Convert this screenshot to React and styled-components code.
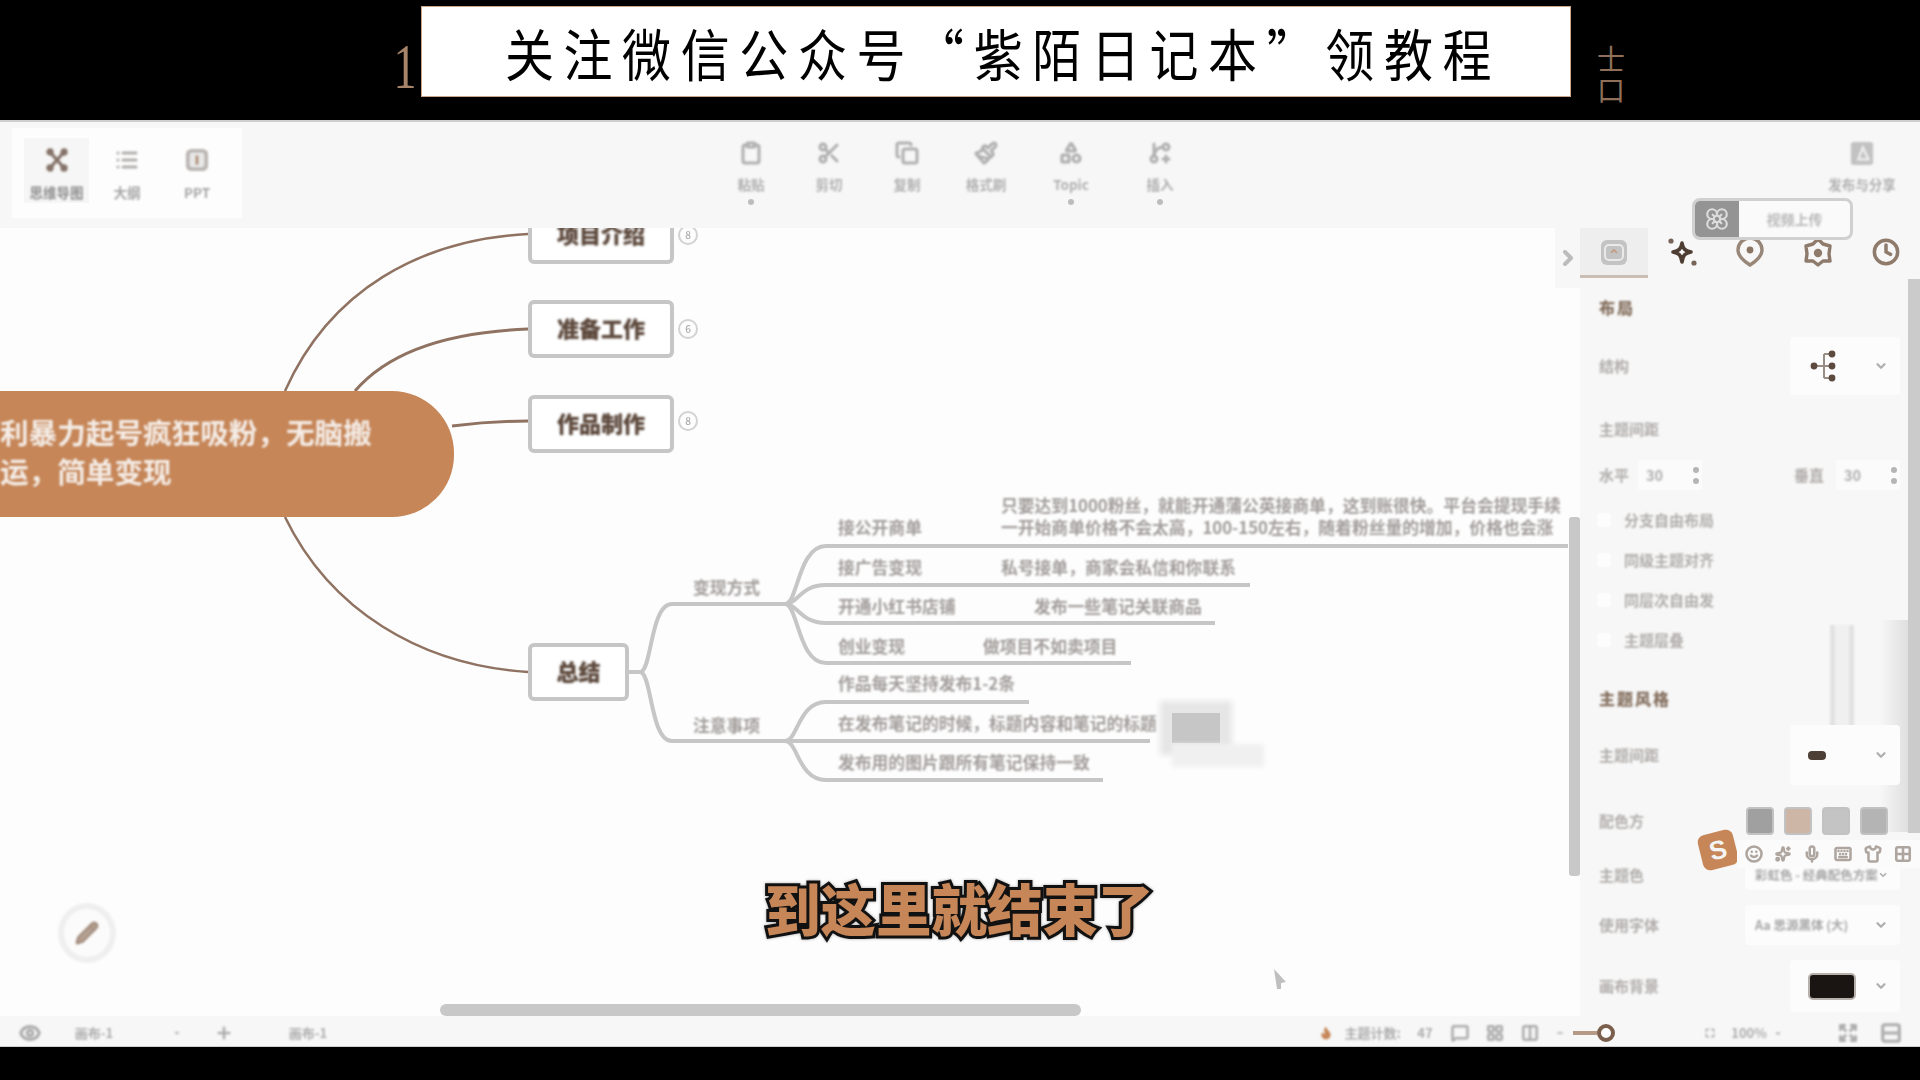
import React from 'react';
import styled, { createGlobalStyle } from 'styled-components';
import { List, Clipboard, Scissors, Copy, Paintbrush, Shapes, GitBranchPlus, Flower, Clock, ChevronDown, ChevronRight, Pencil, Eye, Plus, Flame, MessageSquare, LayoutGrid, Columns2, Maximize, Minus, Expand, Rows2, Mic, Keyboard, Shirt, Grid2x2, Smile, Sparkles } from 'lucide-react';

const CJK = '"Noto Sans CJK SC", "Noto Sans", sans-serif';

const Global = createGlobalStyle`
  html, body { margin: 0; padding: 0; background: #000; }
  body { font-family: ${CJK}; width: 1920px; height: 1080px; overflow: hidden; }
  * { box-sizing: border-box; }
`;

const Page = styled.div`
  width: 1920px; height: 1080px; display: flex; flex-direction: column; background: #000;
`;
const Banner = styled.header`
  height: 120px; flex: none; background: #000; display: flex; align-items: flex-start; padding: 7px 0 0 388px;
`;
const StrayOne = styled.span`
  width: 34px; height: 92px; display: flex; align-items: flex-end; justify-content: center;
  font: 64px/64px "Liberation Serif", serif; color: #a88468; transform: scaleX(.72);
`;
const BannerBox = styled.div`
  width: 1148px; height: 89px; background: #fff; box-shadow: 0 0 0 1px #c9a68c;
  display: flex; align-items: center; justify-content: center; overflow: hidden;
`;
const BannerText = styled.h1`
  margin: 0; font: 400 49px/60px ${CJK}; color: #000; letter-spacing: 9.6px; white-space: nowrap;
  transform: scaleY(1.14); padding-left: 14px;
`;
const StrayGlyph = styled.span`
  margin: 38px 0 0 25px; width: 32px; display: flex; flex-direction: column; align-items: center;
  font: 28px/31px "Liberation Serif", "Noto Sans CJK SC", serif; color: #8f6f58;
  span { height: 31px; overflow: hidden; }
`;

const Editor = styled.div`
  position: relative; flex: none; height: 927px; display: flex; flex-direction: column; background: #fdfdfd;
`;
const Toolbar = styled.div`
  height: 108px; flex: none; display: flex; background: #f7f7f7; border-top: 2px solid #cfcfcf;
`;
const LeftGroup = styled.div`
  margin: 6px 0 0 12px; width: 230px; height: 90px; padding: 10px 0 0 12px; background: #fdfdfd; display: flex; align-items: flex-start;
`;
const ModeItem = styled.div`
  width: ${p => p.$w}px; height: 65px; display: flex; flex-direction: column; align-items: center; padding-top: 10px;
  background: ${p => (p.$active ? '#f6f6f6' : 'transparent')};
`;
const IconBox = styled.span`
  width: 24px; height: 24px; flex: none; display: flex; align-items: center; justify-content: center; color: ${p => p.$c || '#b0aeac'}; filter: blur(.8px);
`;
const ModeLabel = styled.span`
  margin-top: 11px; font: 700 13.5px/18px ${CJK}; color: ${p => p.$c || '#a6a6a6'}; white-space: nowrap; filter: blur(1px);
`;
const CenterGroup = styled.div`
  margin-left: 470px; display: flex; align-items: flex-start;
`;
const Tool = styled.div`
  width: ${p => p.$w}px; display: flex; flex-direction: column; align-items: center; padding-top: 19px;
`;
const ToolLabel = styled.span`
  margin-top: 10px; font: 700 13.5px/18px ${CJK}; color: #b0b0b0; white-space: nowrap; filter: blur(1px);
`;
const Caret = styled.span`
  margin-top: 6px; width: 6px; height: 6px; border-radius: 50%; background: #bdbdbd; filter: blur(.5px);
`;
const RightTool = styled(Tool)`
  margin-left: auto; margin-right: 8px;
`;

const UploadButton = styled.div`
  position: absolute; left: 1692px; top: 78px; width: 161px; height: 42px; display: flex; border: 3px solid #d0d0d0; border-radius: 8px; background: #fafafa; overflow: hidden; z-index: 3;
`;
const UploadIcon = styled.span`
  width: 44px; background: #949494; display: flex; align-items: center; justify-content: center; color: #dcdcdc; flex: none;
  svg { filter: blur(.6px); }
`;
const UploadText = styled.span`
  flex: 1; text-align: center; font: 700 14px/36px ${CJK}; color: #b8b8b8; filter: blur(1.1px);
`;

const Main = styled.main`
  height: 788px; flex: none; display: flex;
`;
const Canvas = styled.section`
  position: relative; width: 1580px; flex: none; overflow: hidden; background: #fdfdfd;
`;
const Links = styled.svg`
  position: absolute; left: 0; top: 0; width: 1580px; height: 788px; filter: blur(.3px);
`;
const Root = styled.div`
  position: absolute; left: -300px; top: 163px; width: 754px; height: 126px; border-radius: 62px; background: #c68658;
  padding: 21px 0 0 300px; font: 700 28.6px/39px ${CJK}; color: #f4ece6;
  span { display: block; white-space: nowrap; filter: blur(1px); }
`;
const TopicNode = styled.div`
  position: absolute; left: 528px; top: ${p => p.$top}px; width: ${p => p.$w || 146}px; height: 58px;
  border: 4px solid #c6c6c6; border-radius: 6px; background: #fff; display: flex; align-items: center; justify-content: center; padding-bottom: 4px;
  font: 900 22px/30px ${CJK}; color: #5f4a3d;
  span { filter: blur(1px); text-shadow: 0 0 2px #bbb; }
`;
const Badge = styled.span`
  position: absolute; left: 678px; top: ${p => p.$top}px; width: 20px; height: 20px; border: 2px solid #d2d2d2; border-radius: 50%;
  font: 500 10px/16px ${CJK}; text-align: center; color: #aaa; filter: blur(.5px);
`;
const MapText = styled.span`
  position: absolute; left: ${p => p.$x}px; top: ${p => p.$y - 241}px; height: 24px;
  font: 700 16.8px/24px ${CJK}; color: #a09c9a; white-space: nowrap; filter: blur(1px);
`;
const Smudge = styled.div`
  position: absolute; left: 1172px; top: 485px; width: 48px; height: 30px; background: #c6c6c6;
  box-shadow: 0 0 6px 12px #e6e6e6;
`;
const SmudgeLow = styled.div`
  position: absolute; left: 1172px; top: 516px; width: 92px; height: 23px; background: #f0f0f0; filter: blur(2px);
`;
const FloatButton = styled.div`
  position: absolute; left: 58px; top: 675px; width: 58px; height: 60px; border-radius: 50%; border: 6px solid #efefef; background: #fbfbfb;
  display: flex; align-items: center; justify-content: center; color: #a89384; filter: blur(.8px);
`;
const HScroll = styled.div`
  position: absolute; left: 440px; top: 776px; width: 641px; height: 12px; border-radius: 6px; background: #c8c8c8;
`;
const VScroll = styled.div`
  position: absolute; left: 1569px; top: 289px; width: 11px; height: 359px; background: #c8c8c8; border-radius: 3px;
`;
const CursorMark = styled.svg`
  position: absolute; left: 1272px; top: 740px; width: 16px; height: 22px; filter: blur(.4px);
`;
const Subtitle = styled.div`
  position: absolute; left: 765px; top: 644px; width: 400px; white-space: nowrap;
  font: 900 55.5px/70px ${CJK}; color: #c68658; -webkit-text-stroke: 6px #111; paint-order: stroke fill;
  filter: drop-shadow(0 0 1.5px #aaa);
`;

const Panel = styled.aside`
  position: relative; width: 340px; flex: none; background: #f7f7f7;
`;
const PanelTab = styled.div`
  display: flex; height: 62px; position: relative;
`;
const PanelExtension = styled.div`
  position: absolute; left: -25px; top: 0; width: 25px; height: 60px; background: #f7f7f7; display: flex; align-items: center; justify-content: center; color: #bcbcbc;
  svg { filter: blur(.6px); }
`;
const Tab = styled.div`
  width: 68px; height: 50px; display: flex; align-items: center; justify-content: center;
  background: ${p => (p.$active ? '#eeeeee' : 'transparent')};
  border-bottom: 3px solid ${p => (p.$active ? '#c9bdb4' : 'transparent')};
  color: ${p => p.$c || '#a79a90'};
  svg { filter: blur(.7px); }
`;
const Body = styled.div`
  position: relative; padding: 0 20px 0 19px;
`;
const Row = styled.div`
  display: flex; align-items: center; justify-content: space-between; height: ${p => p.$h}px; margin-top: ${p => p.$mt || 0}px;
`;
const Heading = styled.span`
  font: 900 16px/24px ${CJK}; color: #85705f; filter: blur(.9px); letter-spacing: 2px;
`;
const FieldLabel = styled.span`
  font: 700 15px/20px ${CJK}; color: #b0adab; filter: blur(1.1px); white-space: nowrap;
`;
const SelectBox = styled.div`
  width: ${p => p.$w || 110}px; height: 100%; background: #fcfcfc; border-radius: 4px; display: flex; align-items: center; justify-content: space-between; padding: 0 12px 0 ${p => p.$pl || 18}px; color: #b0b0b0;
`;
const Pair = styled.div`
  display: flex; align-items: center; width: ${p => p.$w}px;
`;
const NumField = styled.div`
  margin-left: ${p => p.$ml}px; width: 64px; height: 30px; background: #fbfbfb; display: flex; align-items: center; justify-content: space-between; padding: 0 2px 0 8px;
  font: 700 14.5px/30px ${CJK}; color: #b0b0b0;
  b { font-weight: 700; filter: blur(1.1px); }
`;
const Spin = styled.span`
  width: 8px; display: flex; flex-direction: column; gap: 5px; align-items: center;
  i { width: 6px; height: 6px; border-radius: 50%; background: #b5b5b5; }
`;
const CheckLine = styled.div`
  display: flex; align-items: center; gap: 13px; height: ${p => p.$h}px; margin-top: ${p => p.$mt}px;
`;
const Check = styled.span`
  width: 14px; height: 14px; margin-left: -2px; border-radius: 3px; background: #fcfcfc; flex: none;
`;
const Swatches = styled.div`
  display: flex; gap: 10px; margin-left: auto; margin-right: 12px;
`;
const Swatch = styled.span`
  width: 28px; height: 28px; border-radius: 4px; background: ${p => p.$bg}; border: 2px solid #c2c2c2; filter: blur(.3px);
`;
const DarkPill = styled.span`
  width: 48px; height: 27px; background: #1a1512; border: 2px solid #b8b0aa; border-radius: 5px;
`;
const SmallPill = styled.span`
  width: 18px; height: 9px; background: #4d3f35; border-radius: 4px; filter: blur(.6px);
`;
const SelectText = styled.span`
  font: 700 12.5px/20px ${CJK}; color: #a6a6a6; white-space: nowrap; filter: blur(1px);
`;
const PanelScroll = styled.div`
  position: absolute; right: 0; top: 51px; width: 12px; height: 554px; background: #cbcbcb;
`;
const Ghost = styled.div`
  position: absolute; left: 250px; top: 397px; width: 24px; height: 115px; border-left: 5px solid #e2e2e2; border-right: 5px solid #e2e2e2; background: #f0f0f0; filter: blur(.8px);
`;
const GhostShade = styled.div`
  position: absolute; left: 300px; top: 392px; width: 28px; height: 212px; background: linear-gradient(90deg, #f7f7f7, #dfdfdf);
`;
const ImeBar = styled.div`
  position: absolute; left: 157px; top: 612px; width: 183px; height: 28px; background: #fbfbfb; display: flex; align-items: center; justify-content: space-around; color: #aea59f; padding: 0 2px;
  svg { filter: blur(.7px); }
`;
const ImeLogo = styled.span`
  position: absolute; left: 120px; top: 604px; width: 36px; height: 36px; border-radius: 7px; background: #c68658; transform: rotate(-14deg);
  display: flex; align-items: center; justify-content: center; font: 900 26px/36px "Liberation Sans", sans-serif; color: #f4f4f4;
`;

const StatusBar = styled.footer`
  height: 31px; flex: none; display: flex; align-items: center; padding-top: 4px; background: #f7f7f7; border-bottom: 1px solid #cfcfcf; color: #bcbcbc;
`;
const StatusItem = styled.span`
  width: ${p => p.$w}px; margin-left: ${p => p.$ml || 0}px; flex: none; display: flex; align-items: center; justify-content: center;
  font: 700 13px/20px ${CJK}; color: ${p => p.$c || '#adadad'}; white-space: nowrap; filter: blur(.9px);
`;
const Track = styled.span`
  width: 24px; height: 4px; margin-left: 9px; flex: none; background: #b79a85;
`;
const Knob = styled.span`
  width: 18px; height: 18px; flex: none; border-radius: 50%; border: 4px solid #7a5f4c; background: #fff; filter: blur(.3px);
`;
const BottomBlack = styled.div`
  height: 33px; flex: none; background: #000;
`;

const Cross = () => (
  <svg width="26" height="26" viewBox="0 0 24 24" fill="none" stroke="#86736a" strokeWidth="3.4" strokeLinecap="round">
    <path d="M5 4 19 20M19 4 5 20" />
    <circle cx="5" cy="4" r="2" /><circle cx="19" cy="4" r="2" /><circle cx="5" cy="20" r="2" /><circle cx="19" cy="20" r="2" />
  </svg>
);
const SlideIcon = () => (
  <svg width="26" height="26" viewBox="0 0 26 26">
    <rect x="1" y="1" width="24" height="24" rx="6" fill="#b9b5b2" />
    <rect x="5" y="5" width="16" height="16" rx="3" fill="#e8e8e8" />
    <rect x="11.5" y="8" width="3" height="10" fill="#b09078" />
  </svg>
);
const ShareDoc = () => (
  <svg width="26" height="26" viewBox="0 0 26 26">
    <rect x="1" y="1" width="24" height="25" rx="3" fill="#c2c2c2" />
    <path d="M14 7 20 20H9Z" fill="none" stroke="#f0f0f0" strokeWidth="2.4" />
  </svg>
);
const TabFace = () => (
  <svg width="30" height="30" viewBox="0 0 30 30">
    <rect x="2" y="3" width="26" height="25" rx="6" fill="#c3c3c3" />
    <rect x="6" y="8" width="18" height="15" rx="4" fill="none" stroke="#e9e9e9" strokeWidth="2" />
    <path d="M12 16 15 13 18 16" fill="none" stroke="#c39a80" strokeWidth="1.6" />
  </svg>
);
const TabSpark = () => (
  <svg width="30" height="32" viewBox="0 0 30 32" fill="none">
    <path d="M15 7C16 13 18 15 24 16 18 17 16 19 15 26 14 19 12 17 6 16 12 15 14 13 15 7Z" stroke="#4e3d33" strokeWidth="3.6" strokeLinejoin="round" />
    <circle cx="4" cy="5" r="2.6" fill="#776358" /><circle cx="27" cy="27" r="2.6" fill="#776358" />
  </svg>
);
const TabPin = () => (
  <svg width="28" height="30" viewBox="0 0 28 30" fill="none">
    <path d="M14 28C6 23 2 18 2 13A12 12 0 0 1 26 13C26 18 22 23 14 28Z" stroke="#988678" strokeWidth="3.4" />
    <circle cx="14" cy="13" r="3.4" fill="#8a7565" />
  </svg>
);
const TabFlower = () => (
  <svg width="30" height="30" viewBox="0 0 30 30" fill="none">
    <path d="M15 2 20 7 27 9 26 17 27 24 20 24 15 28 10 24 3 24 4 17 3 9 10 7Z" stroke="#8f7b6c" strokeWidth="3.4" strokeLinejoin="round" />
    <circle cx="15" cy="16" r="4.2" fill="#8f7b6c" />
  </svg>
);
const TreeIcon = () => (
  <svg width="30" height="34" viewBox="0 0 30 34" fill="none" stroke="#9a8d84" strokeWidth="2">
    <path d="M6 17H16M16 5V29M16 5H23M16 17H23M16 29H23" />
    <circle cx="6" cy="17" r="3.4" fill="#5d4a3f" stroke="none" />
    <circle cx="24" cy="5" r="3.4" fill="#5d4a3f" stroke="none" />
    <circle cx="24" cy="17" r="3.4" fill="#5d4a3f" stroke="none" />
    <circle cx="24" cy="29" r="3.4" fill="#5d4a3f" stroke="none" />
  </svg>
);

const tools = [
  { w: 78, label: '粘贴', icon: <Clipboard size={26} strokeWidth={3} />, caret: true },
  { w: 78, label: '剪切', icon: <Scissors size={26} strokeWidth={3} /> },
  { w: 78, label: '复制', icon: <Copy size={26} strokeWidth={3} /> },
  { w: 80, label: '格式刷', icon: <Paintbrush size={26} strokeWidth={3} /> },
  { w: 90, label: 'Topic', icon: <Shapes size={26} strokeWidth={3.2} />, caret: true },
  { w: 88, label: '插入', icon: <GitBranchPlus size={26} strokeWidth={3} />, caret: true },
];

const mapTexts = [
  { x: 693, y: 588, t: '变现方式' },
  { x: 693, y: 726, t: '注意事项' },
  { x: 838, y: 528, t: '接公开商单' },
  { x: 838, y: 568, t: '接广告变现' },
  { x: 838, y: 607, t: '开通小红书店铺' },
  { x: 838, y: 647, t: '创业变现' },
  { x: 838, y: 684, t: '作品每天坚持发布1-2条' },
  { x: 838, y: 724, t: '在发布笔记的时候\uFF0C标题内容和笔记的标题' },
  { x: 838, y: 763, t: '发布用的图片跟所有笔记保持一致' },
  { x: 1001, y: 506, t: '只要达到1000粉丝\uFF0C就能开通蒲公英接商单\uFF0C这到账很快。平台会提现手续' },
  { x: 1001, y: 528, t: '一开始商单价格不会太高\uFF0C100-150左右\uFF0C随着粉丝量的增加\uFF0C价格也会涨' },
  { x: 1001, y: 568, t: '私号接单\uFF0C商家会私信和你联系' },
  { x: 1034, y: 607, t: '发布一些笔记关联商品' },
  { x: 983, y: 647, t: '做项目不如卖项目' },
];

const curves = [
  { d: 'M285 391C330 290 420 240 528 234', c: '#8f7261', w: 2.5 },
  { d: 'M355 391C390 350 450 332 528 329', c: '#8f7261', w: 3 },
  { d: 'M452 426C475 423 500 421 528 421', c: '#8f7261', w: 3 },
  { d: 'M285 517C330 610 420 665 528 672', c: '#8f7261', w: 2.5 },
];
const grey = [
  'M629 672H640C652 672 650 604 672 604H785',
  'M640 672C652 672 650 741 672 741H785',
  'M785 604C798 604 798 546 826 546H1568',
  'M785 604C798 604 800 585 826 585H1250',
  'M785 604C798 604 800 623 826 623H1215',
  'M785 604C798 604 798 663 826 663H1131',
  'M785 741C798 741 798 702 826 702H1029',
  'M785 741H1150',
  'M785 741C798 741 798 780 826 780H1103',
];

export default function App() {
  return (
    <Page>
      <Global />
      <Banner>
        <StrayOne>1</StrayOne>
        <BannerBox><BannerText>关注微信公众号“紫陌日记本”领教程</BannerText></BannerBox>
        <StrayGlyph><span>士</span><span>口</span></StrayGlyph>
      </Banner>
      <Editor>
        <Toolbar>
          <LeftGroup>
            <ModeItem $w={65} $active><IconBox><Cross /></IconBox><ModeLabel $c="#8e8e8e">思维导图</ModeLabel></ModeItem>
            <ModeItem $w={76}><IconBox><List size={26} strokeWidth={3} /></IconBox><ModeLabel>大纲</ModeLabel></ModeItem>
            <ModeItem $w={64}><IconBox><SlideIcon /></IconBox><ModeLabel>PPT</ModeLabel></ModeItem>
          </LeftGroup>
          <CenterGroup>
            {tools.map(t => (
              <Tool key={t.label} $w={t.w}>
                <IconBox $c="#b0b0b0">{t.icon}</IconBox>
                <ToolLabel>{t.label}</ToolLabel>
                {t.caret && <Caret />}
              </Tool>
            ))}
          </CenterGroup>
          <RightTool $w={100}>
            <IconBox><ShareDoc /></IconBox>
            <ToolLabel>发布与分享</ToolLabel>
          </RightTool>
        </Toolbar>
        <UploadButton>
          <UploadIcon><Flower size={26} /></UploadIcon>
          <UploadText>视频上传</UploadText>
        </UploadButton>
        <Main>
          <Canvas>
            <Links viewBox="0 228 1580 788" fill="none">
              {curves.map(c => <path key={c.d} d={c.d} stroke={c.c} strokeWidth={c.w} />)}
              {grey.map(d => <path key={d} d={d} stroke="#c6c6c6" strokeWidth="4" />)}
            </Links>
            <Root><span>{'利暴力起号疯狂吸粉\uFF0C无脑搬'}</span><span>{'运\uFF0C简单变现'}</span></Root>
            <TopicNode $top={-22}><span>项目介绍</span></TopicNode>
            <TopicNode $top={72}><span>准备工作</span></TopicNode>
            <TopicNode $top={167}><span>作品制作</span></TopicNode>
            <TopicNode $top={415} $w={101}><span>总结</span></TopicNode>
            <Badge $top={-3}>8</Badge>
            <Badge $top={91}>6</Badge>
            <Badge $top={183}>8</Badge>
            {mapTexts.map(m => <MapText key={m.t} $x={m.x} $y={m.y}>{m.t}</MapText>)}
            <Smudge />
            <SmudgeLow />
            <FloatButton><Pencil size={24} fill="#b9a595" strokeWidth={3} /></FloatButton>
            <CursorMark viewBox="0 0 16 22"><path d="M2 1 14 14 9 15 9 21 5 21 2 1Z" fill="#bfbfbf" /></CursorMark>
            <VScroll />
            <HScroll />
            <Subtitle>到这里就结束了</Subtitle>
          </Canvas>
          <Panel>
            <GhostShade />
            <Ghost />
            <PanelTab>
              <PanelExtension><ChevronRight size={24} strokeWidth={4} /></PanelExtension>
              <Tab $active><TabFace /></Tab>
              <Tab><TabSpark /></Tab>
              <Tab><TabPin /></Tab>
              <Tab><TabFlower /></Tab>
              <Tab $c="#8f7b6c"><Clock size={28} strokeWidth={3} /></Tab>
            </PanelTab>
            <Body>
              <Row $h={34}><Heading>布局</Heading></Row>
              <Row $h={58} $mt={13}>
                <FieldLabel>结构</FieldLabel>
                <SelectBox><TreeIcon /><ChevronDown size={14} strokeWidth={4} /></SelectBox>
              </Row>
              <Row $h={20} $mt={24}><FieldLabel>主题间距</FieldLabel></Row>
              <Row $h={30} $mt={21}>
                <Pair $w={200}><FieldLabel>水平</FieldLabel><NumField $ml={9}><b>30</b><Spin><i /><i /></Spin></NumField></Pair>
                <Pair $w={106}><FieldLabel>垂直</FieldLabel><NumField $ml={12}><b>30</b><Spin><i /><i /></Spin></NumField></Pair>
              </Row>
              <CheckLine $h={24} $mt={18}><Check /><FieldLabel>分支自由布局</FieldLabel></CheckLine>
              <CheckLine $h={24} $mt={16}><Check /><FieldLabel>同级主题对齐</FieldLabel></CheckLine>
              <CheckLine $h={24} $mt={16}><Check /><FieldLabel>同层次自由发</FieldLabel></CheckLine>
              <CheckLine $h={24} $mt={16}><Check /><FieldLabel>主题层叠</FieldLabel></CheckLine>
              <Row $h={24} $mt={34}><Heading>主题风格</Heading></Row>
              <Row $h={60} $mt={15}>
                <FieldLabel>主题间距</FieldLabel>
                <SelectBox><SmallPill /><ChevronDown size={14} strokeWidth={4} /></SelectBox>
              </Row>
              <Row $h={28} $mt={22}>
                <FieldLabel>配色方</FieldLabel>
                <Swatches>
                  <Swatch $bg="#a0a0a0" />
                  <Swatch $bg="#cdb6a5" />
                  <Swatch $bg="#c4c4c4" />
                  <Swatch $bg="#b4b4b4" />
                </Swatches>
              </Row>
              <Row $h={30} $mt={25}>
                <FieldLabel>主题色</FieldLabel>
                <SelectBox $w={155} $pl={10}><SelectText>彩虹色 - 经典配色方案</SelectText><ChevronDown size={14} strokeWidth={4} /></SelectBox>
              </Row>
              <Row $h={40} $mt={15}>
                <FieldLabel>使用字体</FieldLabel>
                <SelectBox $w={155} $pl={10}><SelectText>Aa 思源黑体 (大)</SelectText><ChevronDown size={14} strokeWidth={4} /></SelectBox>
              </Row>
              <Row $h={52} $mt={15}>
                <FieldLabel>画布背景</FieldLabel>
                <SelectBox><DarkPill /><ChevronDown size={14} strokeWidth={4} /></SelectBox>
              </Row>
            </Body>
            <PanelScroll />
            <ImeLogo>S</ImeLogo>
            <ImeBar>
              <Smile size={18} strokeWidth={3.4} />
              <Sparkles size={16} strokeWidth={3.4} />
              <Mic size={18} strokeWidth={3.4} />
              <Keyboard size={18} strokeWidth={3.4} />
              <Shirt size={18} strokeWidth={3.4} />
              <Grid2x2 size={18} strokeWidth={3.4} />
            </ImeBar>
          </Panel>
        </Main>
        <StatusBar>
          <StatusItem $w={24} $ml={18}><Eye size={22} strokeWidth={3.4} /></StatusItem>
          <StatusItem $w={44} $ml={30}>画布-1</StatusItem>
          <StatusItem $w={6} $ml={58}><ChevronDown size={8} strokeWidth={5} /></StatusItem>
          <StatusItem $w={18} $ml={35}><Plus size={18} strokeWidth={3.4} /></StatusItem>
          <StatusItem $w={46} $ml={52}>画布-1</StatusItem>
          <StatusItem $w={14} $ml={988} $c="#c68658"><Flame size={14} fill="#c68658" /></StatusItem>
          <StatusItem $w={65} $ml={7}>主题计数:</StatusItem>
          <StatusItem $w={20} $ml={10}>47</StatusItem>
          <StatusItem $w={18} $ml={16}><MessageSquare size={18} strokeWidth={3.4} /></StatusItem>
          <StatusItem $w={18} $ml={17}><LayoutGrid size={18} strokeWidth={3.4} /></StatusItem>
          <StatusItem $w={18} $ml={17}><Columns2 size={18} strokeWidth={3.4} /></StatusItem>
          <StatusItem $w={8} $ml={17}><Minus size={8} strokeWidth={4} /></StatusItem>
          <Track />
          <Knob />
          <StatusItem $w={10} $ml={90}><Maximize size={10} strokeWidth={4} /></StatusItem>
          <StatusItem $w={38} $ml={15}>100%</StatusItem>
          <StatusItem $w={6} $ml={7}><ChevronDown size={7} strokeWidth={5} /></StatusItem>
          <StatusItem $w={20} $ml={57}><Expand size={20} strokeWidth={3.4} /></StatusItem>
          <StatusItem $w={22} $ml={22}><Rows2 size={22} strokeWidth={3.4} /></StatusItem>
        </StatusBar>
      </Editor>
      <BottomBlack />
    </Page>
  );
}
